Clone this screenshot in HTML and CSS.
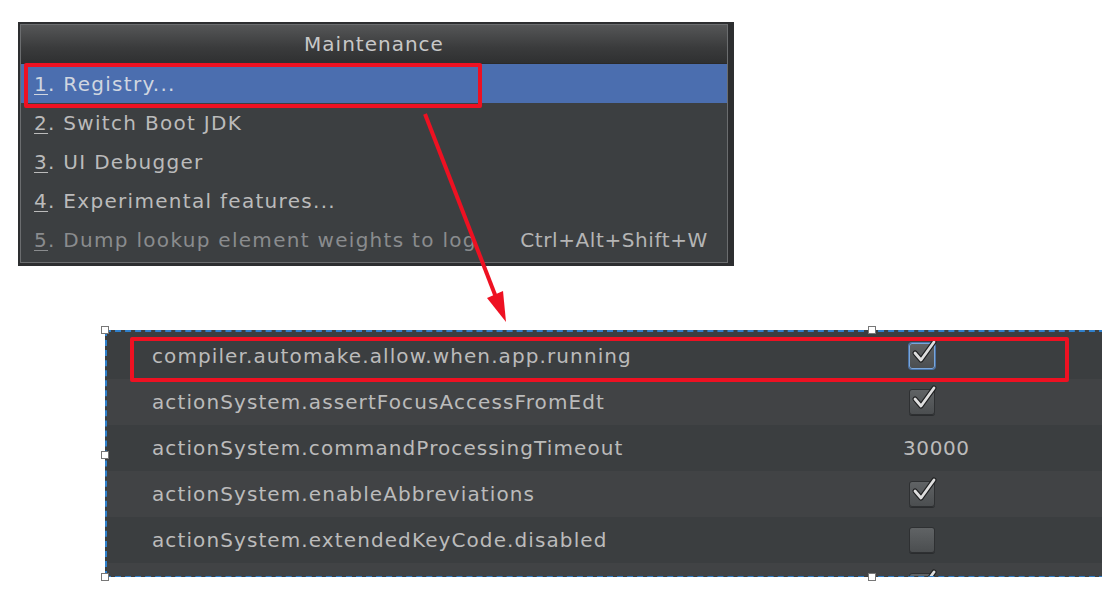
FILE: index.html
```html
<!DOCTYPE html>
<html>
<head>
<meta charset="utf-8">
<link rel="stylesheet" href="styles.css">
</head>
<body>
<div class="page">
  <div class="menu">
    <div class="menu-inner">
      <div class="menu-title">Maintenance</div>
      <div class="menu-item selected"><span><u>1</u>. Registry...</span></div>
      <div class="menu-item"><span><u>2</u>. Switch Boot JDK</span></div>
      <div class="menu-item"><span><u>3</u>. UI Debugger</span></div>
      <div class="menu-item"><span><u>4</u>. Experimental features...</span></div>
      <div class="menu-item disabled"><span><u>5</u>. Dump lookup element weights to log</span><span class="shortcut">Ctrl+Alt+Shift+W</span></div>
    </div>
  </div>

  <div class="registry">
    <div class="reg-rows">
      <div class="reg-row odd"><span class="reg-key">compiler.automake.allow.when.app.running</span><span class="reg-val"><span class="cb focus"><svg class="tick" width="30" height="30" viewBox="0 0 30 30"><path d="M6 15 L12 22 L25 4" class="tick-shadow"/><path d="M6 15 L12 22 L25 4" class="tick-mark"/></svg></span></span></div>
      <div class="reg-row even"><span class="reg-key">actionSystem.assertFocusAccessFromEdt</span><span class="reg-val"><span class="cb"><svg class="tick" width="30" height="30" viewBox="0 0 30 30"><path d="M6 15 L12 22 L25 4" class="tick-shadow"/><path d="M6 15 L12 22 L25 4" class="tick-mark"/></svg></span></span></div>
      <div class="reg-row odd"><span class="reg-key">actionSystem.commandProcessingTimeout</span><span class="reg-val">30000</span></div>
      <div class="reg-row even"><span class="reg-key">actionSystem.enableAbbreviations</span><span class="reg-val"><span class="cb"><svg class="tick" width="30" height="30" viewBox="0 0 30 30"><path d="M6 15 L12 22 L25 4" class="tick-shadow"/><path d="M6 15 L12 22 L25 4" class="tick-mark"/></svg></span></span></div>
      <div class="reg-row odd"><span class="reg-key">actionSystem.extendedKeyCode.disabled</span><span class="reg-val"><span class="cb"></span></span></div>
      <div class="reg-row even"><span class="reg-key"></span><span class="reg-val"><span class="cb"><svg class="tick" width="30" height="30" viewBox="0 0 30 30"><path d="M6 15 L12 22 L25 4" class="tick-shadow"/><path d="M6 15 L12 22 L25 4" class="tick-mark"/></svg></span></span></div>
    </div>
    <span class="handle h-tl"></span>
    <span class="handle h-ml"></span>
    <span class="handle h-bl"></span>
    <span class="handle h-tm"></span>
    <span class="handle h-bm"></span>
  </div>

  <div class="mark mark-menu"></div>
  <div class="mark mark-reg"></div>
  <svg class="arrow" width="1102" height="600" viewBox="0 0 1102 600">
    <line x1="425" y1="114" x2="499" y2="305" stroke="#ee1122" stroke-width="4"/>
    <polygon points="506,322 487,298 503,291" fill="#ee1122"/>
  </svg>
</div>
</body>
</html>
```

FILE: styles.css
```css
html, body {
  margin: 0;
  padding: 0;
  background: #ffffff;
}
.page {
  position: relative;
  width: 1102px;
  height: 600px;
  overflow: hidden;
  font-family: "DejaVu Sans", "Noto Sans", sans-serif;
}
.menu {
  margin-left: 18px;
  margin-top: 22px;
  width: 716px;
  box-sizing: border-box;
  border: 2px solid #2d2e30;
  border-right-width: 6px;
  border-bottom-width: 3px;
  background: #2d2e30;
}
.menu-inner {
  border: 1px solid #6b6d6f;
  background: #3c3f41;
  padding-bottom: 3px;
}
.menu-title {
  height: 38px;
  display: flex;
  align-items: center;
  justify-content: center;
  background: linear-gradient(#555657, #3a3b3c 60%, #2f3031);
  color: #c8c8c8;
  font-size: 20px;
  letter-spacing: 1px;
  border-bottom: 1px solid #2a2a2a;
}
.menu-item {
  height: 39px;
  display: flex;
  align-items: center;
  justify-content: space-between;
  padding-left: 13px;
  padding-right: 19px;
  color: #bbbbbb;
  font-size: 20px;
  letter-spacing: 1.3px;
}
.menu-item u {
  text-decoration-thickness: 1px;
  text-underline-offset: 3px;
}
.menu-item.selected {
  background: #4b6eaf;
  color: #d0d6e0;
}
.menu-item.disabled {
  color: #8a8c8e;
}
.menu-item .shortcut {
  color: #b5b5b5;
  letter-spacing: 0.6px;
}
.registry {
  position: relative;
  margin-left: 105px;
  margin-top: 64px;
  width: 1010px;
  height: 247px;
  box-sizing: border-box;
  border: 2px dashed #2f80cc;
  background: #3c3f41;
}
.reg-rows {
  height: 243px;
  overflow: hidden;
  padding-top: 1px;
}
.reg-row {
  height: 46px;
  display: flex;
  align-items: center;
  color: #bbbbbb;
  font-size: 20px;
  letter-spacing: 1.1px;
}
.reg-row.odd { background: #3b3e40; }
.reg-row.even { background: #414345; }
.reg-key {
  width: 796px;
  padding-left: 45px;
  box-sizing: border-box;
}
.reg-val {
  display: flex;
  align-items: center;
  letter-spacing: 0.6px;
}
.cb {
  position: relative;
  display: inline-block;
  width: 26px;
  height: 26px;
  margin-left: 6px;
  border-radius: 3px;
  box-sizing: border-box;
  background: linear-gradient(#606365, #4b4e50);
  border: 1px solid #2e3032;
  box-shadow: 0 1px 0 #2a2c2e;
}
.cb.focus {
  border: 1px solid #7aa6da;
  box-shadow: 0 0 0 1px #4a73a8;
}
.tick {
  position: absolute;
  left: -1px;
  top: -6px;
  overflow: visible;
}
.tick-shadow {
  fill: none;
  stroke: #1e1f20;
  stroke-width: 5;
  stroke-linecap: round;
  stroke-linejoin: round;
}
.tick-mark {
  fill: none;
  stroke: #dedede;
  stroke-width: 2.8;
  stroke-linecap: round;
  stroke-linejoin: round;
}
.handle {
  position: absolute;
  width: 6px;
  height: 6px;
  background: #ffffff;
  border: 1px solid #777;
}
.h-tl { left: -6px; top: -6px; }
.h-ml { left: -6px; top: 119px; }
.h-bl { left: -6px; bottom: -6px; }
.h-tm { left: 761px; top: -6px; }
.h-bm { left: 761px; bottom: -6px; }
.mark {
  position: absolute;
  border: 4px solid #ee1122;
  border-radius: 2px;
  box-sizing: border-box;
}
.mark-menu {
  left: 24px;
  top: 63px;
  width: 458px;
  height: 45px;
}
.mark-reg {
  left: 130px;
  top: 337px;
  width: 939px;
  height: 45px;
}
.arrow {
  position: absolute;
  left: 0;
  top: 0;
  pointer-events: none;
}
```
